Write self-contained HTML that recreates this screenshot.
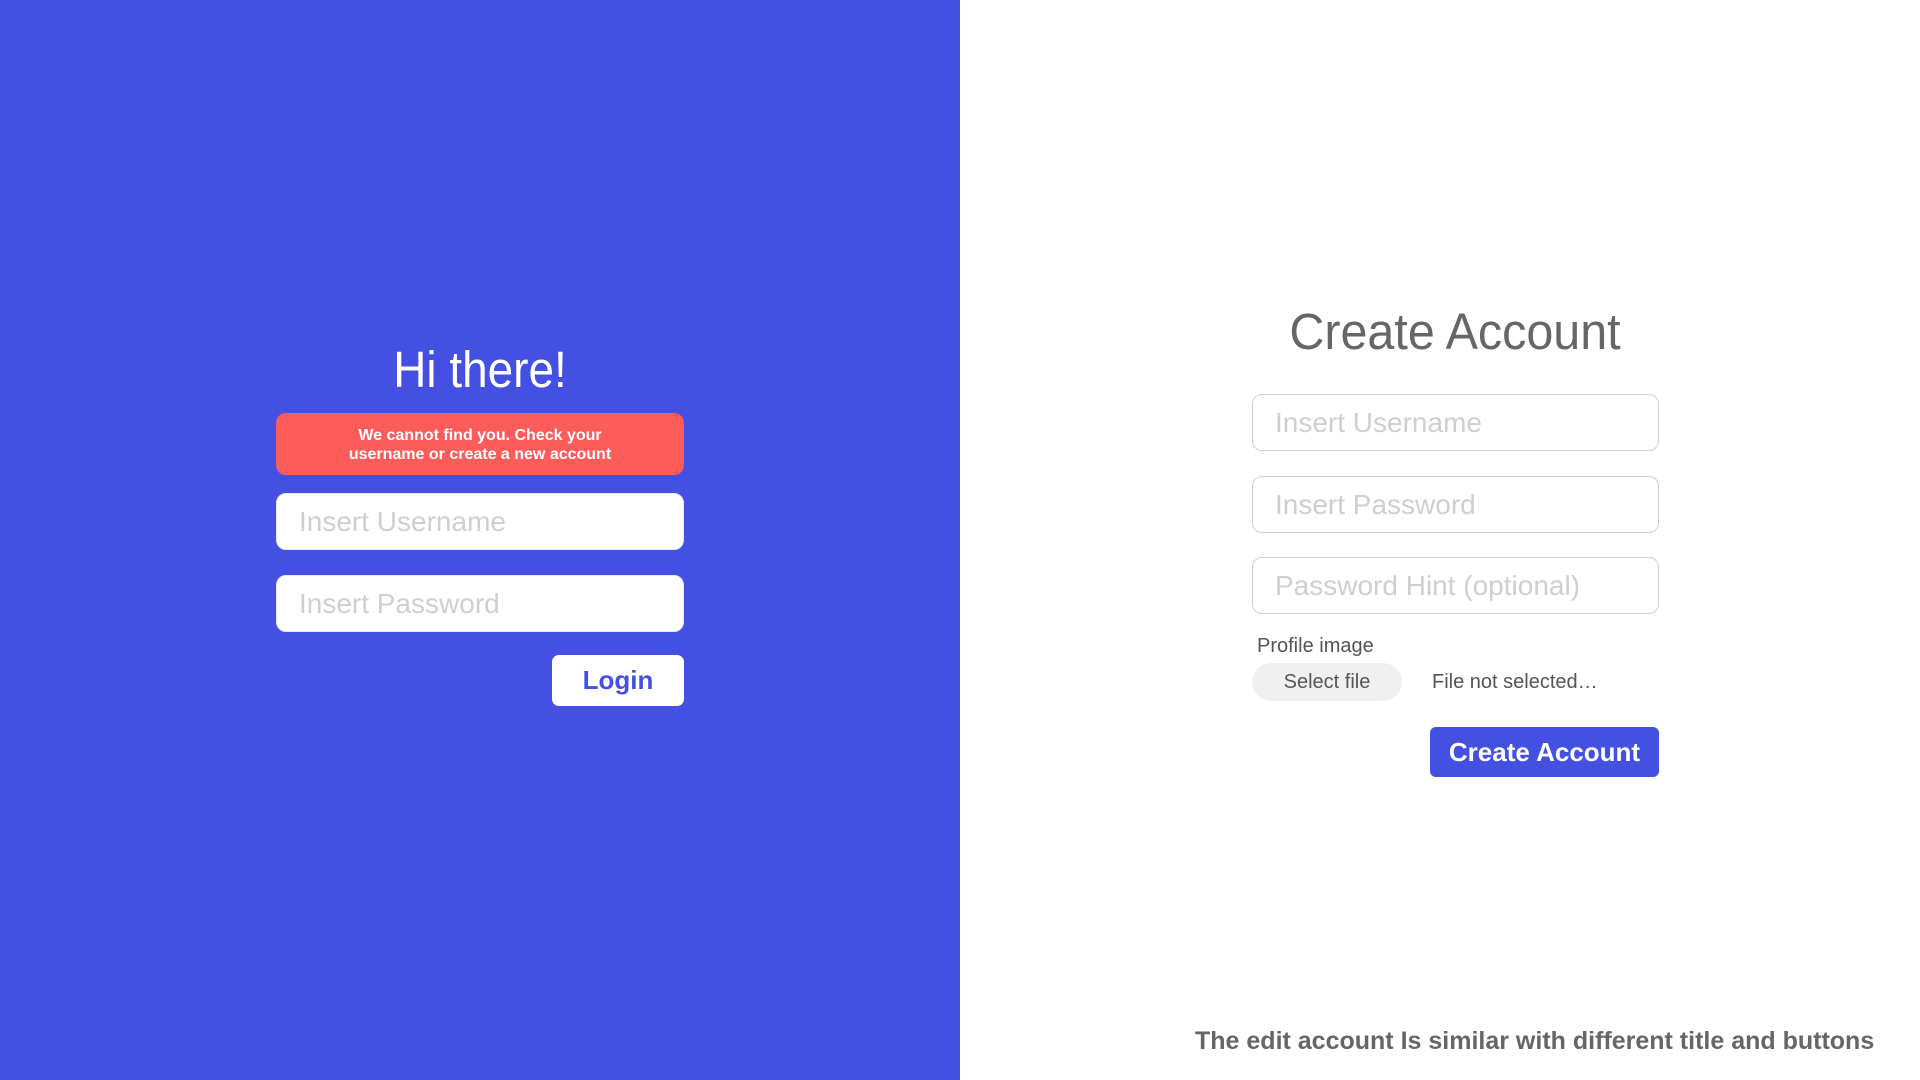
<!DOCTYPE html>
<html><head><meta charset="utf-8"><style>
*{margin:0;padding:0;box-sizing:border-box}
body{width:1920px;height:1080px;position:relative;background:#fff;font-family:"Liberation Sans",Arial,sans-serif;overflow:hidden}
.left{position:absolute;left:0;top:0;width:960px;height:1080px;background:#4350e2}
.abs{position:absolute}
.title{font-weight:300;font-size:51px;text-align:center;white-space:nowrap}
.inp{position:absolute;background:#fff;border-radius:10px;border:1px solid #d0d0d0;font-size:28px;color:#cfcfcf;padding-left:22px;display:flex;align-items:center}
</style></head><body>
<div class="left"></div>
<div class="abs title" style="left:280px;width:400px;top:340px;color:#fff;transform:scaleX(.9)">Hi there!</div>
<div class="abs" style="left:276px;top:413px;width:408px;height:62px;background:#fe5b5b;border-radius:10px;color:#fff;font-weight:bold;font-size:16px;line-height:19px;text-align:center;padding-top:13px">We cannot find you. Check your<br>username or create a new account</div>
<div class="inp" style="left:276px;top:493px;width:408px;height:57px;border-color:#e8e8f8">Insert Username</div>
<div class="inp" style="left:276px;top:575px;width:408px;height:57px;border-color:#e8e8f8">Insert Password</div>
<div class="abs" style="left:552px;top:655px;width:132px;height:51px;background:#fff;border-radius:7px;color:#4350e2;font-weight:bold;font-size:26px;display:flex;align-items:center;justify-content:center">Login</div>

<div class="abs title" style="left:1205px;width:500px;top:302px;color:#666;transform:scaleX(.95)">Create Account</div>
<div class="inp" style="left:1252px;top:394px;width:407px;height:57px">Insert Username</div>
<div class="inp" style="left:1252px;top:476px;width:407px;height:57px">Insert Password</div>
<div class="inp" style="left:1252px;top:557px;width:407px;height:57px">Password Hint (optional)</div>
<div class="abs" style="left:1257px;top:635px;font-size:20px;color:#555">Profile image</div>
<div class="abs" style="left:1252px;top:663px;width:150px;height:38px;background:#f0f0f0;border-radius:19px;font-size:20px;color:#555;display:flex;align-items:center;justify-content:center">Select file</div>
<div class="abs" style="left:1432px;top:671px;font-size:20px;color:#555">File not selected…</div>
<div class="abs" style="left:1430px;top:727px;width:229px;height:50px;background:#4350e2;border-radius:6px;color:#fff;font-weight:bold;font-size:26px;display:flex;align-items:center;justify-content:center">Create Account</div>
<div class="abs" style="left:1195px;top:1027px;width:680px;font-size:25px;font-weight:bold;color:#666;white-space:nowrap">The edit account Is similar with different title and buttons</div>
</body></html>
